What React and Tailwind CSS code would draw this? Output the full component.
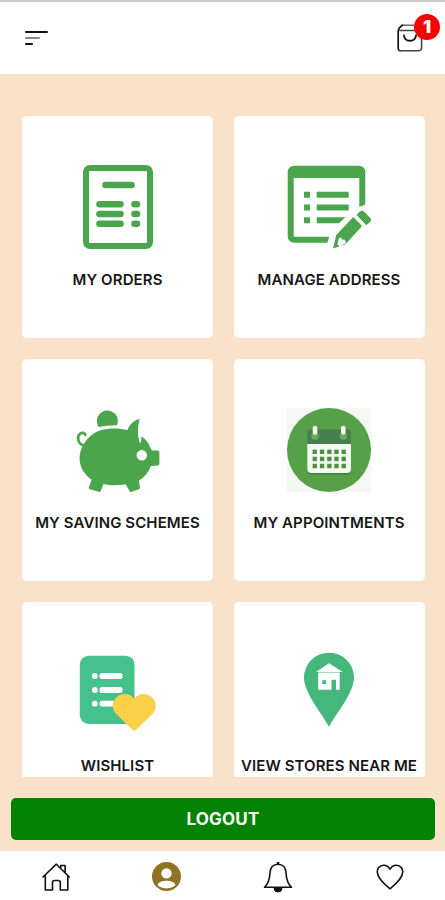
import clsx from 'clsx';

const OrdersIcon = () => (
  <svg viewBox="0 0 84 84" className="size-full" fill="none" stroke="#4aa54c" strokeLinecap="round">
    <rect x="10" y="3" width="64" height="78" rx="4" strokeWidth="6" />
    <path d="M29.5 20h26M23.5 39.3h21M23.5 49h21M23.5 58.7h21M58.5 39.3h2.5M58.5 49h2.5M58.5 58.7h2.5" strokeWidth="6.6" />
  </svg>
);

const AddressIcon = () => (
  <svg viewBox="0 0 84 84" className="size-full" fill="#4aa54c">
    <path d="M7 .7h65a6.3 6.3 0 0 1 6.3 6.3v32.500L72.300 42V13H6.7v58.7h35.6l-2 6H7A6.3 6.3 0 0 1 .7 71.4V7A6.3 6.3 0 0 1 7 .7z" />
    <path d="M17 26.700h6v6h-6zM17 39.500h6v6h-6zM17 52.300h6v6h-6zM29.700 26.700h32v6h-32zM29.700 39.500h32v6h-32zM29.700 52.300h28.600l-6.300 6H29.700z" />
    <path fillRule="evenodd" d="M66.300 52l8.800 8.900L58.500 79.200 46 83.500 49.300 70zM52 73l-1.700 6.500 2.500 1.800 6.400-3.300-1.400-3.200-3-.4-.6-2z" />
    <path d="M69.500 50l3.200-3.200a3.200 3.200 0 0 1 4.500 0l5.800 5.900a3 3 0 0 1 0 4.400l-3.600 3.200z" />
  </svg>
);

const PiggyIcon = () => (
  <svg viewBox="0 0 84 84" className="size-full" fill="#4aa54c">
    <path d="M22.800 19A10.500 10.500 0 1 1 41 17.200Q31.500 17 22.800 19z" />
    <path d="M5.500 40.500C9 32 16 25 24.500 22.300 33 19.800 43 19.800 51.500 22 53.500 16.500 57.500 12.500 63.800 10.700 61.300 19 61.300 28 64 35.500 65.400 33.800 65.500 31 65.500 28.300 70 31.500 72.500 35 74 39L76 42.600h5.700a1.700 1.700 0 0 1 1.700 1.700v11.400a1.700 1.700 0 0 1-1.700 1.700L75 58C72.500 64.500 68.500 69 62.800 72.700L64 79.300Q64.100 80.700 62.800 81.200L55.600 83.800Q54.200 84.200 53.500 83L49.700 76.200C42 77.600 34 77.600 27.500 76L24.700 83Q24.200 84.200 22.800 83.800L13.800 81.200Q12.500 80.700 12.800 79.500L15.600 71.800C5 64.500.8 52.500 5.500 40.500z" />
    <path d="M7.500 37.500C1.500 35.500.8 28 4.200 25.700 6.500 24.200 9 25 9.300 26.800" fill="none" stroke="#4aa54c" strokeWidth="2.700" strokeLinecap="round" />
    <circle cx="65.800" cy="47.300" r="5.200" fill="#fff" />
  </svg>
);

const CalendarIcon = () => (
  <svg viewBox="0 0 84 84" className="size-full">
    <path fill="#f5f7f4" d="M0 0h84v84H0z" />
    <circle cx="42" cy="42" r="42" fill="#56a048" />
    <path fill="#41803f" d="M20.300 58h43.700v4.500a4 4 0 0 1-4 4H24.300a4 4 0 0 1-4-4z" />
    <path fill="#f3f8f1" d="M20.300 35h43.700v26a4 4 0 0 1-4 4H24.300a4 4 0 0 1-4-4z" />
    <path fill="#487f50" d="M23.300 21.300h37.700a3 3 0 0 1 3 3V36H20.300V24.300a3 3 0 0 1 3-3z" />
    <circle cx="28" cy="28" r="3.700" fill="#68ac5a" />
    <circle cx="56.300" cy="28" r="3.700" fill="#68ac5a" />
    <path d="M28 20v4.500M56.300 20v4.500" stroke="#f3f8f1" strokeWidth="4.600" strokeLinecap="round" />
    {[43.8, 50.9, 58].map((y) =>
      [27.7, 35, 42.3, 49.4, 56.7].map((x) => (
        <rect key={`${x}-${y}`} x={x - 2.1} y={y - 2.2} width="4.300" height="4.400" fill="#4b913f" />
      ))
    )}
  </svg>
);

const WishlistIcon = () => (
  <svg viewBox="0 0 84 84" className="size-full">
    <rect x="3.800" y="4.700" width="54.700" height="68.300" rx="9" fill="#45c18c" />
    {[25, 39, 52.7].map((y) => (
      <g key={y} fill="#fff">
        <circle cx="18.800" cy={y} r="2.900" />
        <rect x="23.500" y={y - 2.9} width="23" height="5.800" rx="2.500" />
      </g>
    ))}
    <path fill="#fdd04a" d="M58.200 48c4-6 12.500-6.500 17.500-2 5.200 4.700 5.300 12 .8 16.700L60 78.800a2.500 2.500 0 0 1-3.600 0L40 62.700c-4.500-4.700-4.300-12 .8-16.700 5-4.500 13.400-4 17.400 2z" />
  </svg>
);

const StoreIcon = () => (
  <svg viewBox="0 0 84 84" className="size-full">
    <path fill="#45b77c" d="M42 75.700C35 62.500 17 42 17 26.500a25 24.800 0 0 1 50 0C67 42 49 62.500 42 75.700z" />
    <path fill="#fff" d="M42 12.300L55.700 21H29z" />
    <path fill="#fff" fillRule="evenodd" d="M31.200 21.500h21.500v17.200H49V28.800h-4.500v9.900H31.200zM35.300 29.300v3.800h3.800v-3.800z" />
  </svg>
);

const items = [
  { label: 'MY ORDERS', icon: OrdersIcon },
  { label: 'MANAGE ADDRESS', icon: AddressIcon },
  { label: 'MY SAVING SCHEMES', icon: PiggyIcon },
  { label: 'MY APPOINTMENTS', icon: CalendarIcon },
  { label: 'WISHLIST', icon: WishlistIcon },
  { label: 'VIEW STORES NEAR ME', icon: StoreIcon },
];

const Card = ({ label, icon: Icon }) => (
  <button className="flex h-[222px] flex-col items-center rounded-[5px] bg-white pt-[49px]">
    <span className="block size-[84px]">
      <Icon />
    </span>
    <span className="mt-5 text-[15px] leading-[22px] font-semibold tracking-[0.1px] whitespace-nowrap text-[#171717]">{label}</span>
  </button>
);

const HomeIcon = () => (
  <svg viewBox="0 0 28 28" className="size-7" fill="none" stroke="#111" strokeWidth="1.6" strokeLinejoin="round" strokeLinecap="round">
    <path d="M1 14L14.300 1.200 27.300 14M3.300 13v14h7.200v-7.500a2 2 0 0 1 2-2h3.800a2 2 0 0 1 2 2V27h7.500V13M18.800 4.500V2.500h4.300v6.500" />
  </svg>
);

const ProfileIcon = () => (
  <svg viewBox="0 0 28 28" className="size-[29px]">
    <circle cx="14" cy="14" r="14" fill="#8f7226" />
    <circle cx="14" cy="11" r="5" fill="#fff" />
    <path d="M5.300 22.300c1-3 5-4.100 8.700-4.100s7.700 1.100 8.700 4.100c-2 2-5 3.200-8.700 3.200s-6.700-1.200-8.700-3.200z" fill="#fff" />
  </svg>
);

const BellIcon = () => (
  <svg viewBox="0 0 30 32" className="h-8 w-[30px]" fill="none" stroke="#111" strokeWidth="1.600" strokeLinejoin="round">
    <path d="M15 3.200c-5 0-7.800 3.600-8 8.500C6.700 19 5 23 1.500 26.300h27C25 23 23.300 19 23 11.700c-.2-4.900-3-8.500-8-8.500z" />
    <path d="M15 1v2" strokeWidth="2.500" />
    <path d="M11 27h8a4 4 0 0 1-8 0z" fill="#111" stroke="#111" strokeWidth="1" />
  </svg>
);

const HeartIcon = () => (
  <svg viewBox="0 0 28 26" className="h-[26px] w-7" fill="none" stroke="#111" strokeWidth="1.600" strokeLinejoin="round">
    <path d="M14 5.200C11.500.5 5.500-.2 2.500 3.800-2 10.500 6 18.500 14 24.800 22 18.500 30 10.500 25.500 3.800 22.500-.2 16.500.5 14 5.200z" />
  </svg>
);

const BagIcon = () => (
  <svg viewBox="0 0 26 28" className="h-7 w-[26px]" fill="none" stroke="#111" strokeLinejoin="round" strokeLinecap="round">
    <path d="M5.300 1.200h15.500" stroke="#666" strokeWidth="1.600" />
    <path d="M5.300 1.200C3.500 2.500 1.200 5 1.200 7.500V24.500A2.500 2.500 0 0 0 3 26.700M20.800 1.200C22.500 2.500 24.600 5 24.600 7.500" strokeWidth="1.700" />
    <path d="M24.600 7.500V24a2.800 2.800 0 0 1-2.800 2.800H3.500M3 6.500h21" stroke="#444" strokeWidth="1.600" />
    <path d="M7 11.500c.8 7 11.200 7 12 0" strokeWidth="1.900" />
  </svg>
);

const navItems = [
  { name: 'Home', icon: HomeIcon, className: 'ml-[40px]' },
  { name: 'Account', icon: ProfileIcon, className: 'ml-[78px]' },
  { name: 'Notifications', icon: BellIcon, className: 'ml-[80px]' },
  { name: 'Favourites', icon: HeartIcon, className: 'ml-[80px]' },
];

export default function App() {
  return (
    <div className="flex h-[900px] w-[445px] flex-col overflow-hidden bg-[#fae1ca] font-['Inter',sans-serif]">
      {/* Header */}
      <header className="flex h-[74px] shrink-0 items-center justify-between border-t-2 border-[#c8c8c8] bg-white pr-[22px] pl-[25px]">
        <button aria-label="Menu" className="flex flex-col gap-1">
          <span className="h-[2px] w-[23px] rounded-full bg-[#111]" />
          <span className="h-[2.5px] w-[15px] rounded-full bg-[#888]" />
          <span className="h-[2px] w-[8px] rounded-full bg-[#111]" />
        </button>
        <button aria-label="Cart" className="relative">
          <BagIcon />
          <span className="absolute -top-[10px] left-[17px] flex size-[26px] items-center justify-center rounded-full bg-[#fb0007] text-[18px] leading-none font-black text-white">
            1
          </span>
        </button>
      </header>

      {/* Account menu, cut off above the logout bar */}
      <main className="mt-[42px] h-[661px] shrink-0 overflow-hidden pr-[20.5px] pl-[22px]">
        <div className="grid grid-cols-2 gap-x-[20.5px] gap-y-[21px]">
          {items.map((item) => (
            <Card key={item.label} {...item} />
          ))}
        </div>
      </main>

      <div className="h-[73px] shrink-0 pt-[21px] pr-[10px] pl-[11px]">
        <button className="h-[42px] w-full rounded-[5px] bg-[#028202] pt-[2px] text-[17px] font-bold tracking-[0.2px] text-white">LOGOUT</button>
      </div>

      {/* Bottom navigation */}
      <nav className="flex flex-1 border-t border-[#eee7e1] bg-white">
        {navItems.map(({ name, icon: Icon, className }) => (
          <button key={name} aria-label={name} className={clsx('flex h-[51px] w-8 items-center justify-center', className)}>
            <Icon />
          </button>
        ))}
      </nav>
    </div>
  );
}
